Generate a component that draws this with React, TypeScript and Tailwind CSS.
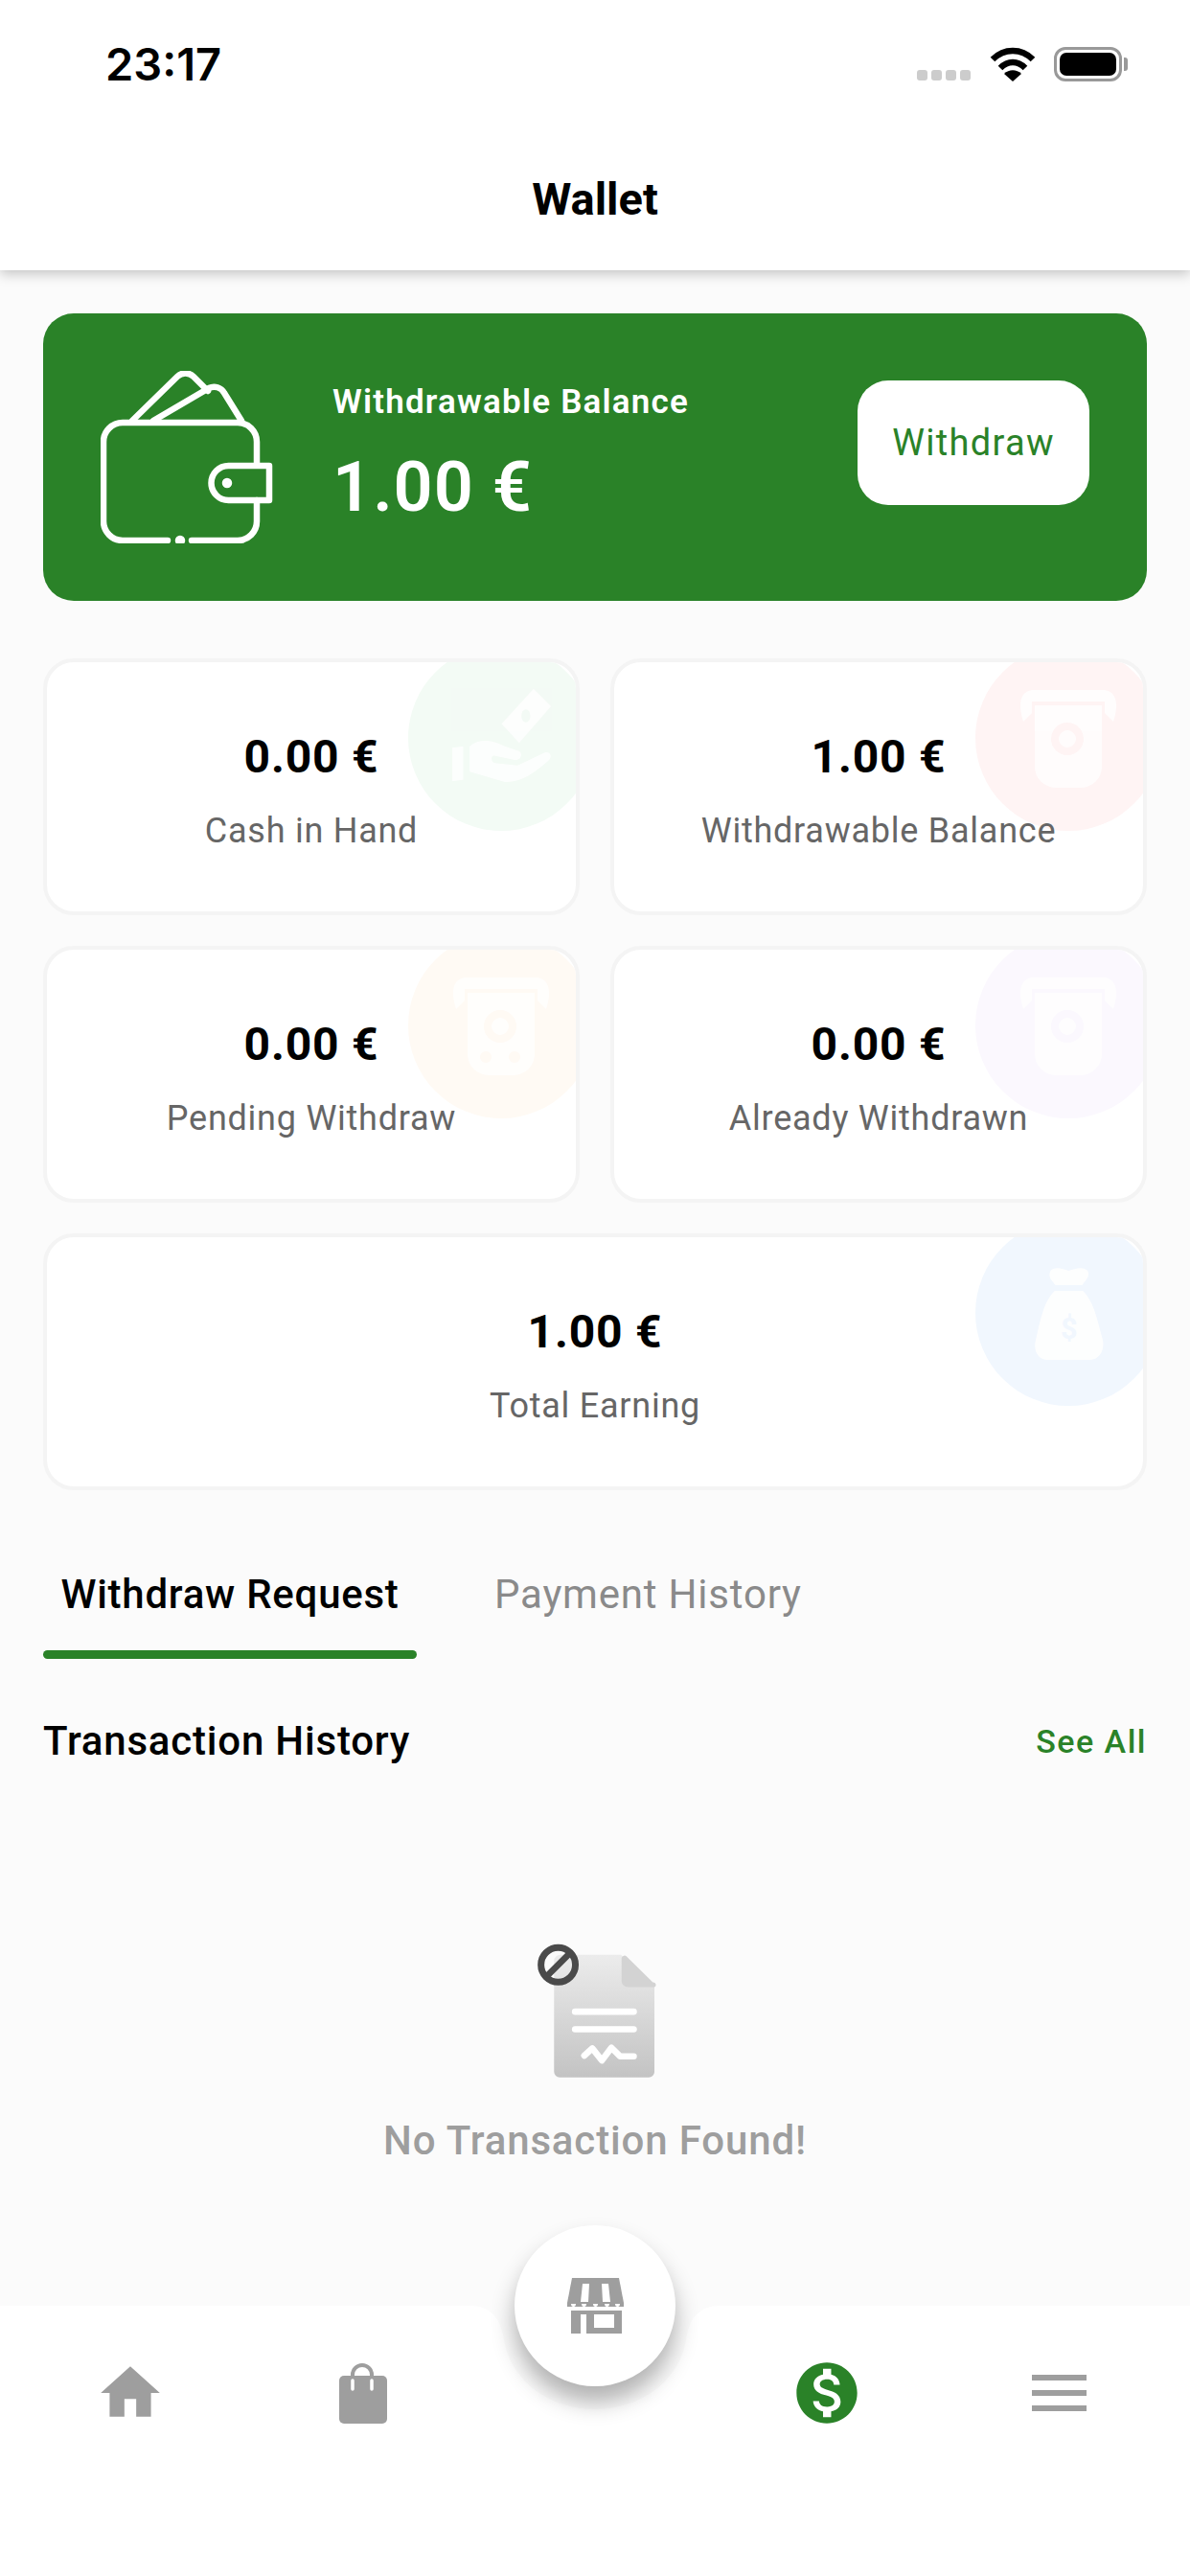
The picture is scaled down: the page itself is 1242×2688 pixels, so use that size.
const GREEN = '#2a8228';

const WalletIcon = () => (
  <svg width="180" height="180" viewBox="0 0 180 180" fill="none" stroke="#fff" strokeWidth="6.5" strokeLinecap="round" strokeLinejoin="round" className="shrink-0">
    <path d="M70 177H23a20 20 0 0 1-20-20V74a20 20 0 0 1 20-20H143a20 20 0 0 1 20 20V97" />
    <path d="M163 135V157a20 20 0 0 1-20 20H95" />
    <circle cx="83" cy="177" r="2" fill="#fff" />
    <path d="M176 99H133.5a18 18 0 0 0 0 36H176z" />
    <circle cx="132" cy="117" r="2" fill="#fff" />
    <path d="M33 52L80 6a12 12 0 0 1 17 0L112 21" />
    <path d="M55 52L113 18a12 12 0 0 1 16 5L147 52" />
  </svg>
);

const HandIcon = ({ tint }: { tint: string }) => (
  <svg width="107" height="100" viewBox="270 140 320 300" className="mb-[6px] opacity-80">
    <path d="M530 145L585 200L485 315L430 255Z" fill="#fff" />
    <ellipse cx="506" cy="230" rx="14" ry="20" fill={tint} />
    <path d="M275 330L310 325V430L275 435Z" fill="#fff" />
    <path d="M330 325C360 300 400 305 440 325L485 340C495 345 495 370 470 368L410 355C395 350 395 375 410 378L480 385L565 345C585 340 590 360 575 372C530 410 490 440 440 437L330 405Z" fill="#fff" />
  </svg>
);

const AtmIcon = ({ tint, dots }: { tint: string; dots?: boolean }) => (
  <svg width="104" height="105" viewBox="0 0 104 105" className="opacity-80">
    <path d="M5 35C0 20 0 4 14 2H90C104 4 104 20 99 35L90 26V14H14V26Z" fill="#fff" />
    <path d="M17 18H87V82A22 22 0 0 1 65 104H39A22 22 0 0 1 17 82Z" fill="#fff" />
    <circle cx="51" cy="53" r="13" fill="none" stroke={tint} strokeWidth="8" />
    {dots && <circle cx="36" cy="85" r="6" fill={tint} />}
    {dots && <circle cx="66" cy="85" r="6" fill={tint} />}
  </svg>
);

const BagIcon = ({ tint }: { tint: string }) => (
  <svg width="75" height="98" viewBox="290 150 225 295" className="opacity-90">
    <path d="M345 165C360 150 385 160 402 165C420 160 445 150 462 165C470 185 455 195 445 210H360C350 195 335 185 345 165Z" fill="#fff" />
    <path d="M358 228H447C480 260 490 310 510 385C515 420 495 445 470 445H335C310 445 290 420 298 385C315 310 325 260 358 228Z" fill="#fff" />
    <text x="403" y="378" textAnchor="middle" fontSize="92" fontWeight="700" fontFamily="Roboto, sans-serif" fill={tint}>$</text>
  </svg>
);

const StatCard = ({ value, label, tint, icon, wide }: { value: string; label: string; tint: string; icon: React.ReactNode; wide?: boolean }) => (
  <div className={`relative h-[268px] overflow-hidden rounded-[32px] border-[4px] border-[#f4f4f4] bg-white pt-[71px] text-center ${wide ? 'col-span-2' : ''}`}>
    <div
      className="absolute -right-[19px] -top-[18px] flex h-[194px] w-[194px] items-center justify-center rounded-full"
      style={{ backgroundColor: tint }}
    >
      {icon}
    </div>
    <div className="relative text-[48px] font-bold leading-[56px] tracking-[0.8px] text-black">{value}</div>
    <div className="relative mt-[25px] text-[36px] leading-[48px] tracking-[0.75px] text-[#666666]">{label}</div>
  </div>
);

const DocIcon = () => (
  <svg width="127" height="143" viewBox="170 80 380 430">
    <defs>
      <linearGradient id="doc" x1="0" y1="0" x2="0" y2="1">
        <stop offset="0" stopColor="#ececec" />
        <stop offset="1" stopColor="#c3c3c3" />
      </linearGradient>
    </defs>
    <path d="M250 118H440L545 215V485a18 18 0 0 1-18 18H248a18 18 0 0 1-18-18V138a20 20 0 0 1 20-20z" fill="url(#doc)" />
    <path d="M442 128a10 10 0 0 1 14-6L540 205a8 8 0 0 1 5 15H462a20 20 0 0 1-20-20z" fill="#d3d3d3" />
    <g fill="none" stroke="#fff" strokeWidth="20" strokeLinecap="round" strokeLinejoin="round">
      <path d="M296 297H480" />
      <path d="M296 352H480" />
      <path d="M325 435L350 412L380 450L410 410L437 437H480" />
    </g>
    <circle cx="243" cy="150" r="54" fill="none" stroke="#4a4a4a" strokeWidth="21" />
    <path d="M208 185L278 115" stroke="#4a4a4a" strokeWidth="20" />
  </svg>
);

const StoreIcon = () => (
  <svg width="59" height="58" viewBox="0 0 59 58">
    <path d="M5 0H54L59 26V30H0V26Z" fill="#9e9e9e" />
    <path d="M16 6H23L22 25H14Z M36 6H43L45 25H37Z" fill="#fff" />
    <g fill="#fff">
      <path d="M4 27h5a2.5 3 0 0 1-5 0z" />
      <path d="M15 27h5a2.5 3 0 0 1-5 0z" />
      <path d="M27 27h5a2.5 3 0 0 1-5 0z" />
      <path d="M39 27h5a2.5 3 0 0 1-5 0z" />
      <path d="M50 27h5a2.5 3 0 0 1-5 0z" />
    </g>
    <path d="M4 34H57V58H20V38H14V58H4Z" fill="#9e9e9e" />
    <rect x="28" y="38" width="21" height="14" fill="#fff" />
  </svg>
);

export default function App() {
  return (
    <div className="relative flex h-[2688px] w-[1242px] flex-col overflow-hidden bg-[#fbfbfb] font-['Roboto',sans-serif]">
      <header className="relative z-10 h-[282px] bg-white shadow-[0_4px_12px_rgba(0,0,0,0.22)]">
        <div className="flex h-[135px] items-start justify-between pl-[110px] pr-[71px] pt-[42px]">
          <span className="font-['Inter',sans-serif] text-[47px] font-semibold leading-[50px] text-black">23:17</span>
          <div className="flex items-end pt-[7px]">
            <div className="mb-[1px] flex gap-[4px]">
              {[0, 1, 2, 3].map((i) => (
                <span key={i} className="h-[11px] w-[11px] rounded-[3px] bg-[#cccccc]" />
              ))}
            </div>
            <svg width="48" height="36" viewBox="0 0 48 36" className="ml-[20px]">
              <path d="M3 13C15 1 33 1 45 13" fill="none" stroke="#000" strokeWidth="6.5" />
              <path d="M11 22C19 14 29 14 37 22" fill="none" stroke="#000" strokeWidth="6.5" />
              <path d="M24 36L15 28C20 23 28 23 33 28Z" fill="#000" />
            </svg>
            <div className="relative ml-[19px] h-[36px] w-[71px] rounded-[12px] border-[3px] border-[#999999] p-[3px]">
              <div className="h-full w-full rounded-[7px] bg-black" />
              <span className="absolute -right-[9px] top-[8px] h-[14px] w-[4px] rounded-r-[3px] bg-[#999999]" />
            </div>
          </div>
        </div>
        <h1 className="text-center text-[47px] font-bold leading-[146px] text-black">Wallet</h1>
      </header>

      <main className="px-[45px] pt-[45px]">
        <section className="flex h-[300px] items-start rounded-[32px] px-[60px] pt-[60px]" style={{ backgroundColor: GREEN }}>
          <WalletIcon />
          <div className="ml-[62px] flex-1 text-white">
            <div className="mt-[9px] text-[35px] font-semibold leading-[48px] tracking-[1.2px]">Withdrawable Balance</div>
            <div className="mt-[23px] text-[72px] font-semibold leading-[84px] tracking-[1px]">1.00 €</div>
          </div>
          <button className="mt-[10px] h-[130px] w-[242px] rounded-[32px] bg-white text-[38px] tracking-[1.3px]" style={{ color: GREEN }}>
            Withdraw
          </button>
        </section>

        <section className="mt-[60px] grid grid-cols-2 gap-[32px]">
          <StatCard value="0.00 €" label="Cash in Hand" tint="#f3fbf5" icon={<HandIcon tint="#f3fbf5" />} />
          <StatCard value="1.00 €" label="Withdrawable Balance" tint="#fff4f4" icon={<AtmIcon tint="#fff4f4" />} />
          <StatCard value="0.00 €" label="Pending Withdraw" tint="#fffaf4" icon={<AtmIcon tint="#fffaf4" dots />} />
          <StatCard value="0.00 €" label="Already Withdrawn" tint="#fbf8fe" icon={<AtmIcon tint="#fbf8fe" />} />
          <StatCard value="1.00 €" label="Total Earning" tint="#f1f7fe" icon={<BagIcon tint="#f1f7fe" />} wide />
        </section>

        <section className="mt-[85px] flex">
          <div className="w-[390px] text-center">
            <div className="text-[42px] font-medium leading-[48px] tracking-[0.75px] text-black">Withdraw Request</div>
            <div className="mt-[34px] h-[9px] rounded-full" style={{ backgroundColor: GREEN }} />
          </div>
          <div className="ml-[81px] text-[42px] leading-[48px] tracking-[0.8px] text-[#8a8a8a]">Payment History</div>
        </section>

        <section className="mt-[62px] flex items-center justify-between">
          <span className="text-[42px] font-medium leading-[48px] tracking-[0.8px] text-black">Transaction History</span>
          <span className="text-[34px] font-medium leading-[48px] tracking-[1.5px]" style={{ color: GREEN }}>See All</span>
        </section>

        <section className="mt-[186px] flex flex-col items-center">
          <DocIcon />
          <p className="mt-[40px] text-[42px] font-medium leading-[48px] tracking-[0.85px] text-[#9e9e9e]">No Transaction Found!</p>
        </section>
      </main>

      <nav className="relative mt-auto h-[282px] bg-white">
        <svg width="292" height="120" viewBox="0 0 292 120" className="absolute left-[475px] top-0">
          <path d="M16 0C36 0 46 12 50 30C56 80 100 108 146 108C192 108 236 80 242 30C246 12 256 0 276 0Z" fill="#fbfbfb" />
        </svg>
        <div className="grid h-[182px] grid-cols-5 items-center justify-items-center px-[15px]">
          <svg width="74" height="74" viewBox="0 0 24 24" fill="#9e9e9e">
            <path d="M10 20v-6h4v6h5v-8h3L12 3 2 12h3v8z" />
          </svg>
          <svg width="50" height="63" viewBox="0 0 50 63">
            <rect x="0" y="13" width="50" height="50" rx="5" fill="#9e9e9e" />
            <path d="M14 15V12a10 10 0 0 1 20 0V15" fill="none" stroke="#9e9e9e" strokeWidth="4" />
            <path d="M14 18V27M34 18V27" stroke="#fff" strokeWidth="3.5" strokeLinecap="round" />
          </svg>
          <span />
          <svg width="76" height="76" viewBox="0 0 24 24" style={{ fill: GREEN }}>
            <path d="M12 2C6.48 2 2 6.48 2 12s4.48 10 10 10 10-4.48 10-10S17.52 2 12 2zm1.41 16.09V20h-2.67v-1.93c-1.71-.36-3.16-1.46-3.27-3.4h1.96c.1 1.05.82 1.87 2.65 1.87 1.96 0 2.4-.98 2.4-1.59 0-.83-.44-1.61-2.67-2.14-2.48-.6-4.18-1.62-4.18-3.67 0-1.72 1.39-2.84 3.11-3.21V4h2.67v1.95c1.86.45 2.79 1.86 2.87 3.39H14.3c-.05-1.11-.64-1.87-2.22-1.87-1.5 0-2.4.68-2.4 1.64 0 .84.65 1.39 2.67 1.91s4.18 1.39 4.18 3.91c-.01 1.83-1.38 2.83-3.12 3.16z" />
          </svg>
          <div className="flex w-[57px] flex-col gap-[10px]">
            <span className="h-[6px] bg-[#9e9e9e]" />
            <span className="h-[6px] bg-[#9e9e9e]" />
            <span className="h-[6px] bg-[#9e9e9e]" />
          </div>
        </div>
        <button className="absolute left-[537px] -top-[84px] flex h-[168px] w-[168px] items-center justify-center rounded-full bg-white shadow-[0_16px_24px_rgba(0,0,0,0.3)]">
          <StoreIcon />
        </button>
      </nav>
    </div>
  );
}
